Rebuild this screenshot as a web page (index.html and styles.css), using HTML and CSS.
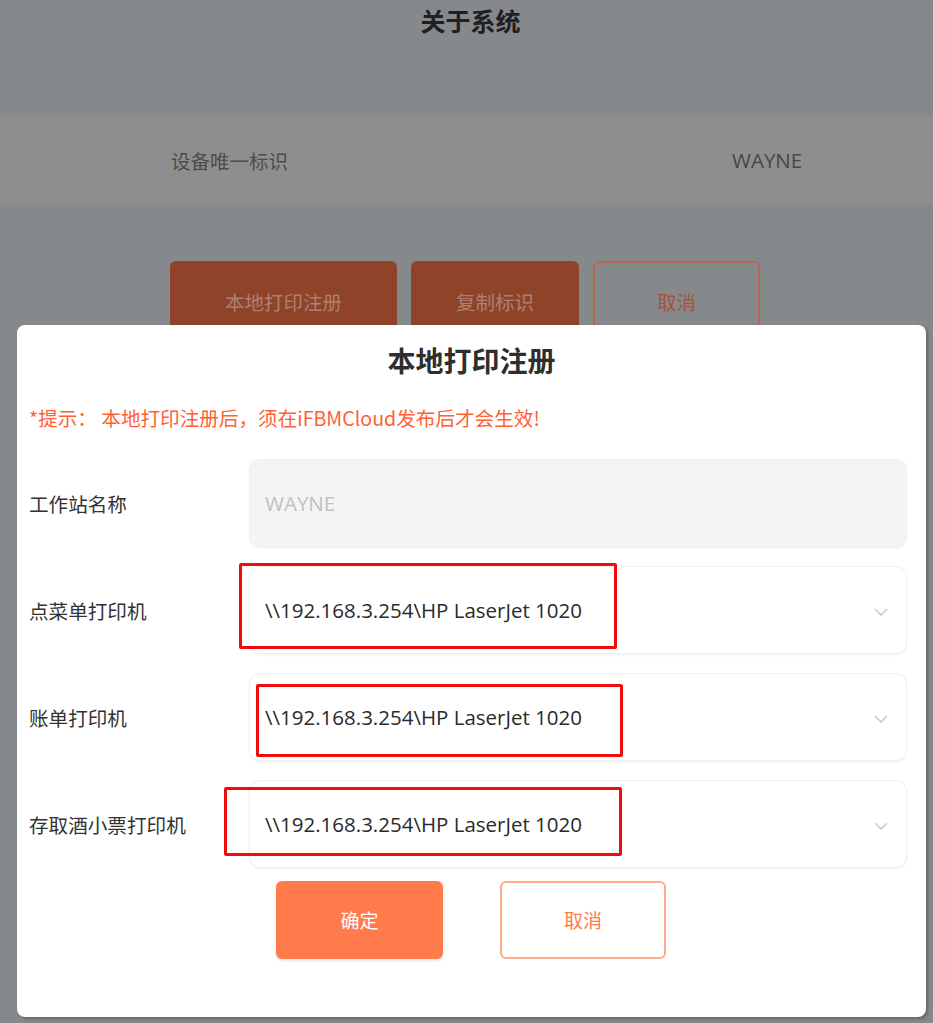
FILE: index.html
```html
<!DOCTYPE html>
<html lang="zh-CN">
<head>
<meta charset="utf-8">
<title>关于系统</title>
<link rel="stylesheet" href="styles.css">
</head>
<body>
<div class="page">
  <h1 class="page-title">关于系统</h1>
  <div class="band">
    <span class="band-label">设备唯一标识</span>
    <span class="band-value">WAYNE</span>
  </div>
  <div class="page-actions">
    <button class="bg-btn bg-btn-wide">本地打印注册</button>
    <button class="bg-btn bg-btn-mid">复制标识</button>
    <button class="bg-btn bg-btn-outline">取消</button>
  </div>
</div>

<div class="modal">
  <h2 class="modal-title">本地打印注册</h2>
  <p class="hint">*提示： 本地打印注册后，须在iFBMCloud发布后才会生效!</p>

  <div class="form">
    <div class="row">
      <span class="label">工作站名称</span>
      <div class="field field-disabled">WAYNE</div>
    </div>
    <div class="row">
      <span class="label">点菜单打印机</span>
      <div class="field">
        <span class="value">\\192.168.3.254\HP LaserJet 1020</span>
        <svg class="chev" viewBox="0 0 14 10" width="14" height="10"><path d="M1 2 L7 8 L13 2" fill="none" stroke="#c4c4c4" stroke-width="1.3"/></svg>
        <span class="mark mark-1"></span>
      </div>
    </div>
    <div class="row">
      <span class="label">账单打印机</span>
      <div class="field">
        <span class="value">\\192.168.3.254\HP LaserJet 1020</span>
        <svg class="chev" viewBox="0 0 14 10" width="14" height="10"><path d="M1 2 L7 8 L13 2" fill="none" stroke="#c4c4c4" stroke-width="1.3"/></svg>
        <span class="mark mark-2"></span>
      </div>
    </div>
    <div class="row">
      <span class="label">存取酒小票打印机</span>
      <div class="field">
        <span class="value">\\192.168.3.254\HP LaserJet 1020</span>
        <svg class="chev" viewBox="0 0 14 10" width="14" height="10"><path d="M1 2 L7 8 L13 2" fill="none" stroke="#c4c4c4" stroke-width="1.3"/></svg>
        <span class="mark mark-3"></span>
      </div>
    </div>
  </div>

  <div class="modal-actions">
    <button class="btn btn-primary">确定</button>
    <button class="btn btn-outline">取消</button>
  </div>
</div>
</body>
</html>
```

FILE: styles.css
```css
* { box-sizing: border-box; }

html, body {
  margin: 0;
  padding: 0;
}

body {
  width: 933px;
  height: 1023px;
  overflow: hidden;
  background: #86898b;
  font-family: "Noto Sans CJK SC", "Noto Sans", sans-serif;
  position: relative;
}

button {
  font-family: inherit;
  cursor: pointer;
}

.page {
  display: flex;
  flex-direction: column;
  align-items: stretch;
}

.page-title {
  margin: 0;
  padding-top: 3px;
  height: 115px;
  text-align: center;
  font-size: 25px;
  line-height: 34px;
  font-weight: 700;
  color: #1f2022;
  padding-left: 8px;
}

.band {
  height: 90px;
  background: #8e8e8e;
  display: flex;
  align-items: center;
  padding-left: 171px;
  font-size: 19.5px;
  color: #4c4c4c;
}

.band-label {
  width: 561px;
}

.band-value {
  font-family: "Open Sans", "Noto Sans", sans-serif;
  font-size: 20.5px;
  color: #474747;
}

.page-actions {
  margin-top: 56px;
  display: flex;
  justify-content: center;
  gap: 14px;
  padding-right: 3px;
}

.bg-btn {
  height: 82px;
  border-radius: 6px;
  border: none;
  background: #8f4429;
  color: #ad8073;
  font-size: 19.5px;
  padding: 0 0 1px;
}

.bg-btn-wide { width: 227px; }
.bg-btn-mid { width: 168px; }
.bg-btn-outline {
  width: 167px;
  background: transparent;
  border: 2px solid #b8674f;
  color: #a9523a;
}

/* modal */
.modal {
  position: absolute;
  left: 17px;
  top: 325px;
  width: 909px;
  height: 692px;
  background: #fff;
  border-radius: 8px;
  box-shadow: 2px 2px 3px rgba(0, 0, 0, 0.25);
  display: flex;
  flex-direction: column;
}

.modal-title {
  margin: 0;
  padding-top: 16px;
  text-align: center;
  font-size: 28px;
  line-height: 38px;
  font-weight: 700;
  color: #2e2e2e;
}

.hint {
  margin: 26px 0 0 12px;
  font-size: 19.6px;
  line-height: 26px;
  color: #ff5f34;
}

.form {
  margin-top: 29px;
  display: flex;
  flex-direction: column;
  gap: 21px;
  padding: 0 20px 0 12px;
}

.row {
  display: flex;
  align-items: center;
}

.label {
  width: 221px;
  flex: none;
  font-size: 19.6px;
  color: #333;
}

.field {
  position: relative;
  flex: 1;
  height: 86px;
  border-radius: 10px;
  background: #fff;
  box-shadow: 0 0 0 1px #f0f0f0, 0 2px 3px rgba(0, 0, 0, 0.07);
  display: flex;
  align-items: center;
  padding: 0 18px 0 15px;
  font-family: "Open Sans", "Noto Sans", sans-serif;
  font-size: 20.5px;
  color: #2a2a2a;
}

.field-disabled {
  background: #f4f4f4;
  color: #c0c0c0;
}

.value {
  flex: 1;
}

.chev {
  flex: none;
  margin-top: 4px;
}

.mark {
  position: absolute;
  border: 3px solid #f00c0c;
  border-radius: 2px;
}

.mark-1 { left: -11px; top: -4px; width: 378px; height: 86px; }
.mark-2 { left: 6px; top: 10px; width: 367px; height: 73px; }
.mark-3 { left: -26px; top: 6px; width: 398px; height: 69px; }

.modal-actions {
  margin-top: 14px;
  display: flex;
  gap: 57px;
  padding-left: 259px;
}

.btn {
  width: 167px;
  height: 78px;
  border-radius: 6px;
  font-size: 19px;
  padding: 0 0 2px;
}

.btn-primary {
  background: #ff7b4b;
  border: none;
  color: #fff;
  box-shadow: 0 2px 3px rgba(0, 0, 0, 0.1);
}

.btn-outline {
  width: 166px;
  background: #fff;
  border: 2px solid #ffab8c;
  color: #ff7b4b;
}
```
